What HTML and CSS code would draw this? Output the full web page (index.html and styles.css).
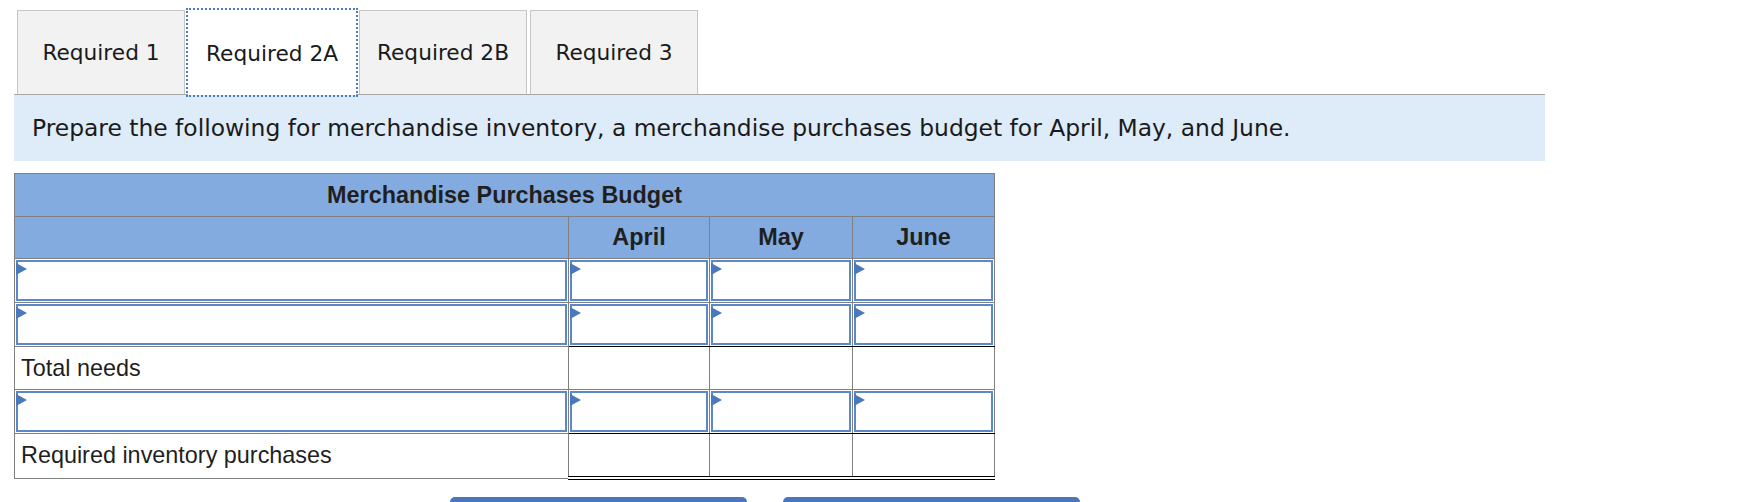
FILE: index.html
```
<!DOCTYPE html>
<html>
<head>
<meta charset="utf-8">
<title>Merchandise Purchases Budget</title>
<link rel="stylesheet" href="styles.css">
</head>
<body>
<div class="page">
  <div class="tabs">
    <div class="tab">Required 1</div>
    <div class="tab active">Required 2A</div>
    <div class="tab">Required 2B</div>
    <div class="tab">Required 3</div>
  </div>
  <div class="instr">Prepare the following for merchandise inventory, a merchandise purchases budget for April, May, and June.</div>
  <table class="budget">
    <colgroup>
      <col class="c-label">
      <col class="c-apr">
      <col class="c-may">
      <col class="c-jun">
    </colgroup>
    <tr class="r-title"><th colspan="4">Merchandise Purchases Budget</th></tr>
    <tr class="r-head"><th></th><th>April</th><th>May</th><th>June</th></tr>
    <tr class="r-in">
      <td class="cell-in"><div class="inp"></div></td>
      <td class="cell-in"><div class="inp"></div></td>
      <td class="cell-in"><div class="inp"></div></td>
      <td class="cell-in"><div class="inp"></div></td>
    </tr>
    <tr class="r-in">
      <td class="cell-in"><div class="inp"></div></td>
      <td class="cell-in ul"><div class="inp"></div></td>
      <td class="cell-in ul"><div class="inp"></div></td>
      <td class="cell-in ul"><div class="inp"></div></td>
    </tr>
    <tr class="r-text">
      <td class="lbl">Total needs</td>
      <td></td><td></td><td></td>
    </tr>
    <tr class="r-in">
      <td class="cell-in"><div class="inp"></div></td>
      <td class="cell-in ul"><div class="inp"></div></td>
      <td class="cell-in ul"><div class="inp"></div></td>
      <td class="cell-in ul"><div class="inp"></div></td>
    </tr>
    <tr class="r-final">
      <td class="lbl">Required inventory purchases</td>
      <td class="dbl"></td><td class="dbl"></td><td class="dbl"></td>
    </tr>
  </table>
  <div class="nav">
    <button class="navbtn" type="button"></button>
    <button class="navbtn" type="button"></button>
  </div>
</div>
</body>
</html>
```
FILE: styles.css
```
html, body {
  margin: 0;
  padding: 0;
  background: #ffffff;
  overflow: hidden;
}

.page {
  width: 1531px;
  padding-left: 14px;
}

.tabs {
  display: flex;
  align-items: flex-start;
  height: 84px;
  padding: 10px 0 0 3px;
  border-bottom: 1px solid #a6a6a6;
}

.tab {
  box-sizing: border-box;
  width: 168px;
  height: 84px;
  padding: 0;
  margin-right: 3px;
  border: 1px solid #c6c6c6;
  border-bottom: 0;
  background: #f2f2f2;
  display: flex;
  align-items: center;
  justify-content: center;
  font-family: "DejaVu Sans", Verdana, sans-serif;
  font-size: 21.7px;
  color: #1a1a1a;
  white-space: nowrap;
}

.tab.active {
  height: 85px;
  margin-bottom: -1px;
  background: #ffffff;
  border-color: transparent;
  outline: 2px dotted #4a7bc4;
  position: relative;
}

.instr {
  box-sizing: border-box;
  height: 66px;
  padding-left: 18px;
  background: #deebf8;
  display: flex;
  align-items: center;
  font-family: "DejaVu Sans", Verdana, sans-serif;
  font-size: 23.4px;
  color: #1a1a1a;
  white-space: nowrap;
}

.budget {
  margin-top: 12px;
  width: 980px;
  table-layout: fixed;
  border-collapse: collapse;
  font-family: "Liberation Sans", Arial, sans-serif;
  font-size: 23.4px;
  color: #1f1f1f;
}

.c-label { width: 554px; }
.c-apr { width: 141px; }
.c-may { width: 143px; }
.c-jun { width: 142px; }

.budget th,
.budget td {
  border: 1px solid #808080;
  padding: 0;
}

.budget th {
  background: #83abdf;
  font-weight: bold;
  text-align: center;
  color: #1f1f1f;
}

.r-title th { height: 42px; }
.r-head th { height: 41px; }

.budget td.cell-in {
  padding: 1px;
  vertical-align: top;
}

.inp {
  height: 37px;
  border: 2px solid #5b88c8;
  background: #ffffff;
  position: relative;
}

.inp::before {
  content: "";
  position: absolute;
  left: -2px;
  top: 1px;
  width: 0;
  height: 0;
  border-left: 11px solid #4a78bd;
  border-top: 6px solid transparent;
  border-bottom: 6px solid transparent;
}

.budget td.ul {
  border-bottom: 1px solid #000000;
}

.r-text td { height: 42px; }
.r-final td { height: 42px; }

.budget td.lbl {
  padding-left: 6px;
  text-align: left;
  vertical-align: middle;
  white-space: nowrap;
}

.budget td.dbl {
  border-bottom: 4px double #000000;
}

.nav {
  display: flex;
  gap: 36px;
  margin-top: 17px;
  padding-left: 436px;
}

.navbtn {
  width: 297px;
  height: 40px;
  border: 0;
  border-radius: 5px;
  background: #4a77b9;
}
```
